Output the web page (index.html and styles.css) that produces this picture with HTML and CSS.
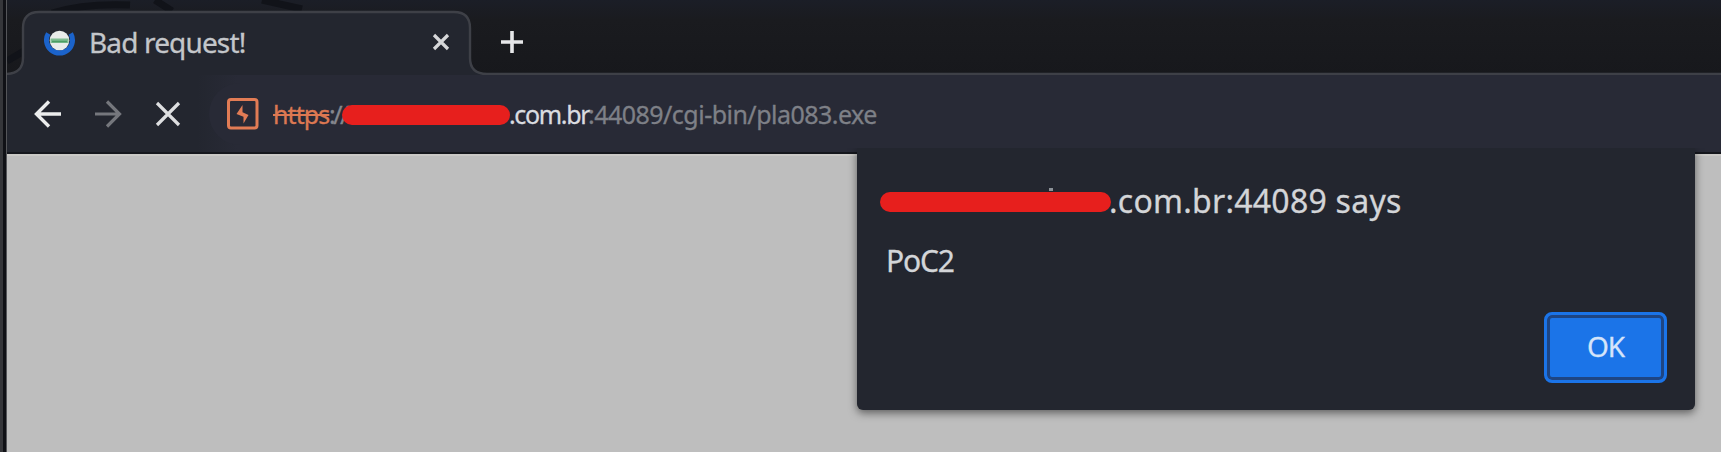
FILE: index.html
```html
<!DOCTYPE html>
<html lang="en">
<head>
<meta charset="utf-8">
<title>Bad request!</title>
<link rel="stylesheet" href="styles.css">
</head>
<body>
<div class="edge"></div>
<div class="window">
  <header class="tabstrip">
    <svg class="tabshape" width="1714" height="80" viewBox="7 0 1714 80">
      <g fill="none" stroke="#111319" stroke-width="7"><path d="M7 61L24 51M52 13Q85 3 130 5M155 0L172 11M262 0L302 9"/></g>
      <path d="M7 74Q23 73 23 58V28Q23 12 39 12H454Q470 12 470 28V58Q470 74 487 74H1721V80H7Z" fill="#23262f"/>
      <path d="M7 74Q23 73 23 58V28Q23 12 39 12H454Q470 12 470 28V58Q470 74 487 74H1721" fill="none" stroke="#3e4047" stroke-width="2.4"/>
    </svg>
    <div class="tab">
      <svg class="favicon" width="32" height="32" viewBox="0 0 32 32">
        <path d="M4.300 7.500A13 13 0 1 0 26.700 7.500" fill="none" stroke="#1b63cb" stroke-width="5"/>
        <circle cx="15.500" cy="14.500" r="9.800" fill="#e9ecea"/>
        <path d="M6.500 12.500H24.500V17H6.500Z" fill="#7fbd91"/>
        <path d="M8 15.500H23" stroke="#4b9d63" stroke-width="1.500"/>
      </svg>
      <span class="tabtitle">Bad request!</span>
      <svg class="close" width="18" height="18" viewBox="0 0 18 18"><path d="M2 2L16 16M16 2L2 16" stroke="#d6d7d9" stroke-width="3.200"/></svg>
    </div>
    <svg class="plus" width="24" height="24" viewBox="0 0 24 24"><path d="M12 1V23M1 12H23" stroke="#e6e7e9" stroke-width="3.600"/></svg>
  </header>
  <nav class="toolbar">
    <svg class="back" width="28" height="28" viewBox="0 0 28 28"><path d="M27 14H3M15 1.500L2.500 14L15 26.500" fill="none" stroke="#eceded" stroke-width="3.400"/></svg>
    <svg class="forward" width="28" height="28" viewBox="0 0 28 28"><path d="M1 14H25M13 1.500L25.500 14L13 26.500" fill="none" stroke="#75777d" stroke-width="3.200"/></svg>
    <svg class="stop" width="26" height="26" viewBox="0 0 26 26"><path d="M2 2L24 24M24 2L2 24" stroke="#dedfe1" stroke-width="3.200"/></svg>
    <div class="address">
      <svg class="burp" width="32" height="32" viewBox="0 0 32 32">
        <rect x="1.500" y="1.500" width="28.500" height="28.500" rx="2.500" fill="none" stroke="#e27c55" stroke-width="3"/>
        <path d="M15.500 7V14.200L21.500 17L16.500 25.500V18.800L9.500 16Z" fill="#e27c55"/>
      </svg>
      <span class="scheme">https</span><span class="slashes">://</span><span class="redact redact-url"></span><span class="host">.com.br</span><span class="path">:44089/cgi-bin/pla083.exe</span>
    </div>
  </nav>
  <main class="page"></main>
</div>
<section class="dialog" role="dialog">
  <div class="origin"><span class="redact redact-title"></span><span class="origintext">.com.br:44089 says</span></div>
  <p class="message">PoC2</p>
  <div class="actions"><button class="ok">OK</button></div>
</section>
</body>
</html>
```
FILE: styles.css
```css
* { box-sizing: border-box; }
body {
  margin: 0;
  width: 1721px;
  height: 452px;
  overflow: hidden;
  display: flex;
  position: relative;
  background: #bebebe;
  font-family: "Noto Sans", sans-serif;
  -webkit-text-stroke: .3px currentColor;
}
.edge {
  width: 7px;
  background: linear-gradient(90deg, #35363a 0 3px, #101116 3px 6px, #55565a 6px);
}
.window { width: 1714px; display: flex; flex-direction: column; }
.tabstrip {
  position: relative;
  height: 75px;
  display: flex;
  background: linear-gradient(#1b1e27, #1a1b1f 20px, #17181c);
}
.tabshape { position: absolute; left: 0; top: 0; }
.tab {
  position: relative;
  width: 463px;
  height: 75px;
  padding: 9px 20px 0 37px;
  display: flex;
  align-items: center;
}
.favicon { flex: none; margin-right: 13px; }
.tabtitle { color: #c4c6ca; font-size: 28px; letter-spacing: -.85px; line-height: 36px; white-space: nowrap; flex: 1; }
.close { flex: none; }
.plus { position: relative; margin: 30px 0 0 30px; }
.toolbar {
  position: relative;
  height: 79px;
  display: flex;
  align-items: center;
  padding-left: 27px;
  background: linear-gradient(90deg, #23262f 190px, #282a36 230px);
  border-bottom: 2px solid #15171d;
}
.forward { margin-left: 32px; }
.stop { margin-left: 33px; }
.address {
  height: 62px;
  margin-left: 28px;
  flex: 1;
  display: flex;
  align-items: center;
  padding-left: 18px;
  background: #282a36;
  border-radius: 31px 0 0 31px;
  font-size: 25px;
  white-space: nowrap;
}
.burp { margin-right: 14px; }
.scheme { color: #dc7852; text-decoration: line-through; text-decoration-thickness: 2px; width: 56px; letter-spacing: -.9px; }
.slashes { color: #85878e; width: 13px; letter-spacing: -2.5px; }
.redact { background: #e71f1d; height: 20px; border-radius: 10px; position: relative; flex: none; }
.redact-url { width: 168px; margin-top: 3px; }
.host { color: #dadce0; width: 79px; margin-left: -1px; letter-spacing: -1.35px; }
.path { color: #7e8087; letter-spacing: -.52px; }
.page { flex: 1; background: #bebebe; border-top: 2px solid #cac9c6; }
.dialog {
  position: absolute;
  left: 857px;
  top: 148px;
  width: 838px;
  height: 262px;
  padding: 32px 28px 0 23px;
  background: #23262f;
  border-radius: 0 0 6px 6px;
  box-shadow: 0 3px 8px rgba(0, 0, 0, .5);
  clip-path: inset(0 -20px -20px -20px);
  color: #d3d5d8;
}
.origin { height: 40px; display: flex; align-items: center; font-size: 32px; white-space: nowrap; }
.origintext { margin-left: -2px; letter-spacing: .25px; }
.redact-title { width: 231px; margin-top: 4px; }
.redact-title::before {
  content: "";
  position: absolute;
  left: 169px;
  top: -4px;
  width: 4px;
  height: 3px;
  background: #8c9298;
}
.message { margin: 21px 0 0 6px; height: 40px; line-height: 40px; font-size: 30px; letter-spacing: -1.2px; }
.actions { display: flex; justify-content: flex-end; margin-top: 31px; }
.ok {
  width: 123px;
  height: 71px;
  border: 3px solid #1b74e8;
  border-radius: 8px;
  padding: 0;
  background: #1b74e8;
  box-shadow: inset 0 0 0 3px #1e4583;
  color: #d5e4fa;
  font: 28px/60px "Noto Sans", sans-serif;
  letter-spacing: -1px;
  padding-bottom: 4px;
}
```
